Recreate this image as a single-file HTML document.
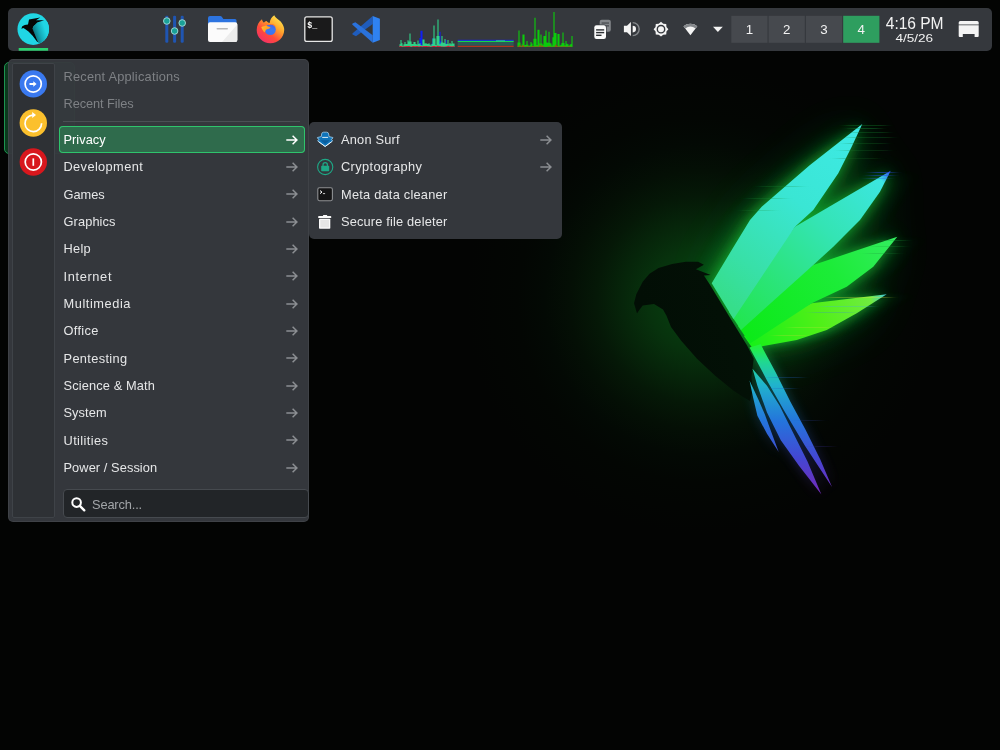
<!DOCTYPE html>
<html><head><meta charset="utf-8"><title>Parrot Desktop</title>
<style>
html,body{margin:0;padding:0;background:#000;}
body{width:1000px;height:750px;overflow:hidden;position:relative;font-family:"Liberation Sans", sans-serif;font-size:12.8px;color:#e6e7e8;}
#wall{position:absolute;left:0;top:0;}
#panel,#menu,#sub{will-change:transform;}
.t{white-space:pre;}
#deskicon{position:absolute;left:4px;top:62px;width:71px;height:91.5px;border:1px solid #1d9550;border-radius:5px;background:#0c3a1e;box-sizing:border-box;}
#panel{position:absolute;left:8px;top:8px;width:984px;height:42.7px;background:#35383d;border-radius:5px;}
#panel svg{position:absolute;}
#menu{position:absolute;left:8px;top:59px;width:300.5px;height:463px;background:rgba(54,57,62,0.97);border-radius:5px;box-shadow:inset 0 0 0 1px rgba(255,255,255,0.06);}
#side{position:absolute;left:4px;top:4px;width:42.5px;height:455px;background:#2e3135;box-sizing:border-box;border:1px solid #3f4348;border-radius:2px;}
#side svg{position:absolute;left:0;top:0;}
.rec{position:absolute;left:55.5px;color:#7e8185;height:20px;line-height:20px;}
.sep{position:absolute;left:55px;top:62px;width:237px;height:1px;background:#4b4f54;}
.row{position:absolute;left:51px;width:246px;height:27.4px;line-height:28.8px;box-sizing:border-box;padding-left:4.5px;border-radius:4px;color:#e6e7e8;}
.row .arr{position:absolute;left:226.6px;top:8.7px;color:#8b8e92;}
.row.sel{background:#2f6b4c;box-shadow:inset 0 0 0 1px #2fc46c;color:#fff;}
.row.sel .arr{color:#fff;}
#search{position:absolute;left:55px;top:430px;width:245.5px;height:29px;box-sizing:border-box;background:#222528;border:1px solid #464a4f;border-radius:4px;}
#search .t{position:absolute;left:28px;top:1px;line-height:28.4px;color:#a2a5a8;}
#search svg{position:absolute;left:7px;top:7px;}
#sub{position:absolute;left:309px;top:122px;width:253px;height:117px;background:#34373c;border-radius:5px;}
#sub .it{position:absolute;left:32px;height:27.4px;line-height:28.4px;color:#e6e7e8;}
#sub .arr{position:absolute;left:231px;color:#8b8e92;}
#sub svg.ic{position:absolute;}
</style></head>
<body>
<svg id="wall" width="1000" height="750" viewBox="0 0 1000 750">
<defs>
<radialGradient id="bgG" cx="700" cy="300" r="260" gradientUnits="userSpaceOnUse">
<stop offset="0.0" stop-color="#084010"/><stop offset="0.1" stop-color="#073c0f"/><stop offset="0.2" stop-color="#07320d"/><stop offset="0.3" stop-color="#06250a"/><stop offset="0.4" stop-color="#051807"/><stop offset="0.5" stop-color="#040f05"/><stop offset="0.6" stop-color="#030904"/><stop offset="0.7" stop-color="#030603"/><stop offset="0.8" stop-color="#030503"/><stop offset="0.9" stop-color="#030403"/><stop offset="1.0" stop-color="#030403"/>
</radialGradient>
<linearGradient id="f1" x1="862" y1="124" x2="722" y2="300" gradientUnits="userSpaceOnUse">
<stop offset="0" stop-color="#3eeae6"/><stop offset="0.45" stop-color="#3ae6d4"/><stop offset="0.8" stop-color="#38e0a8"/><stop offset="1" stop-color="#36de8a"/>
</linearGradient>
<linearGradient id="f2" x1="890" y1="171" x2="740" y2="325" gradientUnits="userSpaceOnUse">
<stop offset="0" stop-color="#3050f0"/><stop offset="0.06" stop-color="#3ce6e0"/><stop offset="0.4" stop-color="#34e4b4"/><stop offset="0.7" stop-color="#2ce480"/><stop offset="1" stop-color="#22e650"/>
</linearGradient>
<linearGradient id="f3" x1="897" y1="237" x2="745" y2="335" gradientUnits="userSpaceOnUse">
<stop offset="0" stop-color="#34ec60"/><stop offset="0.4" stop-color="#1cec38"/><stop offset="1" stop-color="#0cea18"/>
</linearGradient>
<linearGradient id="f4" x1="887" y1="294" x2="752" y2="345" gradientUnits="userSpaceOnUse">
<stop offset="0" stop-color="#40c8e8"/><stop offset="0.12" stop-color="#70ec40"/><stop offset="0.5" stop-color="#50f018"/><stop offset="1" stop-color="#18f018"/>
</linearGradient>
<linearGradient id="tl" x1="0" y1="347" x2="0" y2="496" gradientUnits="userSpaceOnUse">
<stop offset="0" stop-color="#22f040"/><stop offset="0.1" stop-color="#20d890"/><stop offset="0.25" stop-color="#20b4cc"/><stop offset="0.5" stop-color="#2474dc"/><stop offset="0.75" stop-color="#4446d2"/><stop offset="1" stop-color="#7828b8"/>
</linearGradient>
<linearGradient id="bd" x1="650" y1="330" x2="750" y2="300" gradientUnits="userSpaceOnUse">
<stop offset="0" stop-color="#020e05"/><stop offset="0.7" stop-color="#031006"/><stop offset="1" stop-color="#031207"/>
</linearGradient>
<filter id="bl1" x="-50%" y="-50%" width="200%" height="200%"><feGaussianBlur stdDeviation="24"/></filter>
<filter id="blS" x="-20%" y="-20%" width="140%" height="140%"><feGaussianBlur stdDeviation="4 0.5"/></filter>
<filter id="blH" x="-50%" y="-50%" width="200%" height="200%"><feGaussianBlur stdDeviation="16 2"/></filter>
<filter id="bl3" x="-50%" y="-50%" width="200%" height="200%"><feGaussianBlur stdDeviation="12"/></filter>
<filter id="bl2" x="-50%" y="-50%" width="200%" height="200%"><feGaussianBlur stdDeviation="6"/></filter>
<g id="wing">
<polygon fill="url(#f4)" points="811.7,303.3 886.7,294.3 856.7,313.3 826.7,330 796.7,340 756.7,347.3 752,347.5 744,336"/>
<polygon fill="url(#f3)" points="813.3,265 897.3,236.7 873.3,266.7 846.7,286.7 811.7,303.3 750,343.5 738,326"/>
<polygon fill="url(#f2)" points="795,226.7 890.7,170.7 880,191.7 860,220 833.3,246.7 813.3,265 741,330 729,312"/>
<polygon fill="url(#f1)" points="862.3,124 851.7,146.7 838.3,173.3 813.3,210 795,226.7 733.5,319 711.7,283.3 731.7,250 750,220 761.7,206.7 810,165"/>
</g>
<g id="tail" fill="url(#tl)">
<polygon points="749.5,347.5 760.6,344.3 775.5,372 790.4,401.8 805.4,429.6 820.3,459.4 832,487 805.4,446.6 784,410.4 767,380.5"/>
<polygon points="752.5,368.8 767,385.8 779.8,406.1 792.6,431.7 807.5,461.5 821.4,494.6 799,465.8 780.8,440.2 767,412.5 757.4,385.8"/>
<polygon points="749.5,380.5 758.5,399.7 764.9,414.6 771.2,431.7 778.7,451.9 767,433.8 757.4,415.7 753.1,397.6"/>
</g>
<g id="wingG" fill="#12d23a">
<polygon points="811.7,303.3 886.7,294.3 856.7,313.3 826.7,330 796.7,340 756.7,347.3 752,347.5 744,336"/>
<polygon points="813.3,265 897.3,236.7 873.3,266.7 846.7,286.7 811.7,303.3 750,343.5 738,326"/>
<polygon points="795,226.7 890.7,170.7 880,191.7 860,220 833.3,246.7 813.3,265 741,330 729,312"/>
<polygon points="862.3,124 851.7,146.7 838.3,173.3 813.3,210 795,226.7 733.5,319 711.7,283.3 731.7,250 750,220 761.7,206.7 810,165"/>
</g>
</defs>
<rect width="1000" height="750" fill="#030403"/>
<rect width="1000" height="750" fill="url(#bgG)"/>
<use href="#wingG" filter="url(#bl1)" opacity="0.3"/>
<use href="#wingG" filter="url(#bl3)" opacity="0.3"/>
<use href="#wingG" filter="url(#bl2)" opacity="0.42"/>
<use href="#wingG" filter="url(#blH)" opacity="0.3"/>
<use href="#tail" filter="url(#bl2)" opacity="0.35"/>
<path fill="url(#bd)" d="M637,313.5 L634,303.3 L636.3,294.2 L642.7,281.7 L649.5,273.8 L658.5,268.1 L672.1,264 L685.7,261.8 L698.2,261.8 L703.9,264.7 L695.9,269.3 L710.7,274.9 L703.9,275.4 L709.5,284 L728.8,315.7 L746.9,345.2 L753.7,358.8 L751.4,376.9 L752.6,390.5 L750,401 L743.5,397.3 L733.3,390.5 L715.2,375.8 L697,358.8 L681.2,340.7 L671,327 L666.5,315.7 L663,309.4 L654,304 L642.7,305.5 L639.3,310 Z"/>
<use href="#wing"/>
<use href="#tail"/>
<g opacity="0.6" filter="url(#blS)">
<rect x="846" y="125" width="40" height="1" fill="#1c9a3a" opacity="0.5"/><rect x="850" y="128" width="30" height="1" fill="#1c9a3a" opacity="0.6"/><rect x="852" y="132" width="36" height="1" fill="#178a34" opacity="0.5"/><rect x="848" y="137" width="44" height="1" fill="#178a34" opacity="0.45"/><rect x="846" y="143" width="40" height="1" fill="#137a2c" opacity="0.45"/><rect x="842" y="150" width="46" height="1" fill="#137a2c" opacity="0.4"/><rect x="838" y="158" width="40" height="1" fill="#126a28" opacity="0.4"/>
<rect x="760" y="186" width="40" height="1" fill="#168a34" opacity="0.4"/><rect x="748" y="198" width="36" height="1" fill="#168a34" opacity="0.4"/><rect x="742" y="210" width="30" height="1" fill="#168a34" opacity="0.35"/>
<rect x="872" y="172" width="22" height="1" fill="#2848e0" opacity="0.9"/><rect x="870" y="175" width="22" height="1" fill="#2848e0" opacity="0.8"/><rect x="868" y="178" width="20" height="1" fill="#3060e8" opacity="0.6"/>
<rect x="880" y="240" width="26" height="1" fill="#1c9a3a" opacity="0.5"/><rect x="874" y="246" width="30" height="1" fill="#1c9a3a" opacity="0.4"/><rect x="868" y="253" width="30" height="1" fill="#178a34" opacity="0.4"/>
<rect x="830" y="297" width="60" height="1" fill="#e8e040" opacity="0.5"/><rect x="822" y="306" width="50" height="1" fill="#40b0e0" opacity="0.5"/><rect x="812" y="312" width="40" height="1" fill="#3080e0" opacity="0.45"/><rect x="790" y="327" width="40" height="1" fill="#d0e040" opacity="0.4"/><rect x="775" y="335" width="30" height="1" fill="#e0d040" opacity="0.4"/>
<rect x="770" y="377" width="32" height="1" fill="#2060c0" opacity="0.5"/><rect x="772" y="388" width="22" height="1" fill="#2060c0" opacity="0.5"/><rect x="800" y="420" width="20" height="1" fill="#3040a0" opacity="0.4"/><rect x="812" y="446" width="20" height="1" fill="#4030a0" opacity="0.4"/>
</g>
</svg>

<div id="deskicon"></div>
<div id="panel">
<svg width="1000" height="60" viewBox="0 0 1000 60" style="left:-8px;top:-8px">
<defs>
<clipPath id="lgc"><circle cx="33.25" cy="29.1" r="15.8"/></clipPath>
<linearGradient id="lgw" x1="32" y1="30" x2="44" y2="26" gradientUnits="userSpaceOnUse"><stop offset="0" stop-color="#0a6d78"/><stop offset="0.5" stop-color="#14aab8"/><stop offset="1" stop-color="#20d6e4"/></linearGradient>
<linearGradient id="ffg" x1="280" y1="17" x2="261" y2="42" gradientUnits="userSpaceOnUse"><stop offset="0" stop-color="#ffe94f"/><stop offset="0.35" stop-color="#ffa32c"/><stop offset="0.65" stop-color="#ff4b3a"/><stop offset="1" stop-color="#f22d6c"/></linearGradient>
<linearGradient id="ffb" x1="272" y1="24" x2="268" y2="36" gradientUnits="userSpaceOnUse"><stop offset="0" stop-color="#4b5fe8"/><stop offset="0.4" stop-color="#3a7af2"/><stop offset="1" stop-color="#3f6fee"/></linearGradient>
<linearGradient id="ffh" x1="262" y1="26" x2="270" y2="31" gradientUnits="userSpaceOnUse"><stop offset="0" stop-color="#ffbd2e"/><stop offset="1" stop-color="#ff8a22"/></linearGradient>
</defs>
<circle cx="33.25" cy="29.1" r="15.8" fill="#20d6e4"/>
<g clip-path="url(#lgc)"><path d="M32.3,28.6 L36.5,23 L44,20.4 L50,22 L50,38 L39,44 L37.9,41.7 Z" fill="url(#lgw)"/>
<path d="M21.3,28.7 L22.3,26.2 L24.8,25 L28,24.6 L29,19.4 L40.2,17.6 L36,20.3 L44.1,20.2 L37.2,22.6 L33.5,26.3 L32.5,28.6 L38,41.9 L37.3,42 L32.6,35.8 L28.5,31.6 L25.4,29.3 L23.4,27.9 Z" fill="#050505"/></g>
<rect x="18.7" y="48" width="29.4" height="2.7" fill="#2bd46f"/>
<rect x="165.3" y="15.7" width="3" height="27" rx="1.2" fill="#1f55b2"/>
<rect x="173.1" y="15.7" width="3" height="27" rx="1.2" fill="#1f55b2"/>
<rect x="180.7" y="15.7" width="3" height="27" rx="1.2" fill="#1f55b2"/>
<circle cx="166.8" cy="21" r="3.3" fill="#1aa198" stroke="#a9dcd8" stroke-width="0.9"/>
<circle cx="174.6" cy="31" r="3.3" fill="#1aa198" stroke="#a9dcd8" stroke-width="0.9"/>
<circle cx="182.2" cy="23" r="3.3" fill="#1aa198" stroke="#a9dcd8" stroke-width="0.9"/>
<path d="M208,18 a2,2 0 0 1 2,-2 h10.2 a2,2 0 0 1 1.6,0.8 l1.6,2.2 h11.6 a1.5,1.5 0 0 1 1.5,1.5 v6 h-28.5 z" fill="#2d74e0"/>
<rect x="208" y="22.3" width="29.3" height="19.7" rx="2" fill="#fbfbfb"/>
<path d="M237.3,24.5 V40 a2,2 0 0 1 -2,2 H222 Z" fill="#ececec"/>
<rect x="216.5" y="28" width="11.5" height="1.6" rx="0.8" fill="#b9b9b9"/>
<path d="M262,19.3 C262.3,21 262.9,22 264,22.8 C264.6,21.6 265.4,21 266.6,20.9 C267.3,22 268.2,22.6 269.6,23 C270,20 271.6,17 274.3,15.3 C275.6,18.6 280.6,20.2 282.7,24.4 C283.8,26.4 284.3,28.2 284.2,30 C284,37.5 278,43.2 270.4,43.2 C262.8,43.2 256.7,37.3 256.7,30 C256.7,25.5 258.8,21.8 262,19.3 Z" fill="url(#ffg)"/>
<circle cx="270.3" cy="29.6" r="5.5" fill="url(#ffb)"/>
<path d="M261.3,27.2 C263,26 265,26.6 266.2,25.6 C267.2,26.6 269,26.6 270.6,27.2 C270,28.6 268.4,29 266.8,29.2 C265.6,30 265,31.2 265,32.6 C263.2,31.6 262.4,29.4 261.3,27.2 Z" fill="url(#ffh)"/>
<path d="M264.6,23.4 C266,23 268.5,23.2 270.5,24.3 C273,23.5 275.5,25 276.2,27.5 C275,25.5 272.5,24.6 270.3,24.9 C268,24.9 266,24.5 264.6,23.4 Z" fill="#ff7a28"/>
<rect x="304.8" y="16.8" width="27.4" height="24.6" rx="2" fill="#1a1a1b" stroke="#e8e8e8" stroke-width="1.3"/>
<text x="307.2" y="28.2" font-family="'Liberation Mono', monospace" font-weight="bold" font-size="9.6" fill="#fff" textLength="10" lengthAdjust="spacingAndGlyphs">$_</text>
<polygon points="372.7,15.9 372.7,23.9 356,36.3 352.5,34.4 352.4,33.6" fill="#1f5cbc"/>
<polygon points="352.2,24.6 352.5,23.6 355.4,22.3 372.7,35.2 372.7,42.8" fill="#2a72dc"/>
<polygon points="372.7,15.9 379.9,18.8 379.9,39.9 372.7,42.8" fill="#2f82f2"/>
<path d="M400.0,47V46.8M401.0,47V46.7M403.0,47V46.9M405.0,47V46.9M406.0,47V46.9M407.0,47V46.7M408.0,47V46.9M409.0,47V46.9M411.0,47V46.6M412.0,47V46.8M414.0,47V46.9M415.0,47V46.9M416.0,47V46.6M417.0,47V46.9M419.0,47V43.4M420.0,47V38.0M421.0,47V30.8M422.0,47V30.8M423.0,47V46.7M424.0,47V46.9M425.0,47V46.6M426.0,47V46.7M427.0,47V46.7M428.0,47V46.8M430.0,47V46.9M431.0,47V46.7M432.0,47V43.4M433.0,47V38.0M434.0,47V43.4M435.0,47V46.9M436.0,47V46.9M437.0,47V46.6M438.0,47V46.8M439.0,47V40.9M440.0,47V31.7M441.0,47V40.9M442.0,47V46.8M443.0,47V46.7M444.0,47V46.7M445.0,47V44.2M446.0,47V40.0M447.0,47V44.2M448.0,47V46.9M449.0,47V46.7M450.0,47V46.7M451.0,47V46.7M452.0,47V46.8M454.0,47V46.7" stroke="#1020f0" stroke-width="1.1" fill="none" opacity="1"/>
<path d="M400.0,47V44.2M401.0,47V40.0M402.0,47V43.2M403.0,47V45.7M404.0,47V44.3M405.0,47V42.0M406.0,47V43.9M407.0,47V44.1M408.0,47V40.3M409.0,47V41.6M410.0,47V33.4M411.0,47V41.6M412.0,47V43.9M413.0,47V44.0M414.0,47V42.0M415.0,47V42.0M416.0,47V44.0M417.0,47V44.4M418.0,47V40.5M419.0,47V44.1M420.0,47V43.2M421.0,47V44.9M422.0,47V45.4M423.0,47V39.5M424.0,47V39.5M425.0,47V43.5M426.0,47V43.2M427.0,47V43.7M428.0,47V44.1M429.0,47V43.3M430.0,47V44.4M431.0,47V45.6M432.0,47V43.9M433.0,47V38.4M434.0,47V25.5M435.0,47V38.4M436.0,47V45.1M437.0,47V36.0M438.0,47V19.5M439.0,47V36.0M440.0,47V44.2M441.0,47V42.6M442.0,47V36.0M443.0,47V42.6M444.0,47V42.9M445.0,47V39.0M446.0,47V43.8M447.0,47V44.0M448.0,47V40.0M449.0,47V44.2M450.0,47V42.9M451.0,47V44.3M452.0,47V41.1M453.0,47V43.5M454.0,47V43.4" stroke="#2edb8b" stroke-width="1.1" fill="none" opacity="0.95"/>
<path d="M400.0,47V45.9M401.0,47V45.9M402.0,47V46.6M403.0,47V46.5M404.0,47V46.2M405.0,47V46.4M406.0,47V45.9M407.0,47V46.3M408.0,47V45.9M409.0,47V45.9M410.0,47V46.3M411.0,47V46.8M412.0,47V46.6M413.0,47V46.0M414.0,47V46.3M415.0,47V46.2M416.0,47V46.3M417.0,47V46.0M418.0,47V46.2M419.0,47V46.5M420.0,47V46.3M421.0,47V46.0M422.0,47V46.4M423.0,47V46.3M424.0,47V46.1M425.0,47V46.3M426.0,47V45.9M427.0,47V45.9M428.0,47V46.5M429.0,47V45.9M430.0,47V46.7M431.0,47V46.4M432.0,47V46.6M433.0,47V46.1M434.0,47V45.9M435.0,47V46.1M436.0,47V46.7M437.0,47V45.8M438.0,47V45.8M439.0,47V46.3M440.0,47V46.0M441.0,47V46.4M442.0,47V46.5M443.0,47V46.5M444.0,47V46.8M445.0,47V46.4M446.0,47V46.5M447.0,47V46.3M448.0,47V45.8M449.0,47V45.8M450.0,47V46.5M451.0,47V46.0M452.0,47V46.7M453.0,47V45.9M454.0,47V46.5" stroke="#e01030" stroke-width="1.1" fill="none" opacity="1"/>
<rect x="457.7" y="39.8" width="56" height="1.1" fill="#1a20f0"/>
<rect x="457.7" y="40.9" width="56" height="1.1" fill="#14d84a"/>
<rect x="457.7" y="42" width="56" height="3.7" fill="#2c5a58"/>
<rect x="496" y="40.4" width="9" height="0.9" fill="#2fc9a0"/>
<rect x="457.7" y="45.8" width="56" height="1.1" fill="#c0341c"/>
<path d="M518.0,47V42.4M519.0,47V30.5M520.0,47V42.4M521.0,47V45.9M522.0,47V44.5M523.0,47V34.6M524.0,47V34.6M525.0,47V44.9M526.0,47V44.7M527.0,47V41.0M528.0,47V44.8M529.0,47V46.0M530.0,47V45.3M531.0,47V42.0M532.0,47V43.4M533.0,47V46.1M534.0,47V38.8M535.0,47V17.8M536.0,47V38.8M537.0,47V45.0M538.0,47V29.7M539.0,47V29.7M540.0,47V43.5M541.0,47V34.6M542.0,47V43.5M543.0,47V44.7M544.0,47V36.0M545.0,47V36.0M546.0,47V30.4M547.0,47V42.4M548.0,47V42.7M549.0,47V31.8M550.0,47V42.7M551.0,47V43.6M552.0,47V45.5M553.0,47V37.2M554.0,47V11.9M555.0,47V33.0M556.0,47V33.0M557.0,47V46.1M558.0,47V33.9M559.0,47V33.9M560.0,47V45.5M561.0,47V44.7M562.0,47V42.9M563.0,47V32.5M564.0,47V42.9M565.0,47V45.3M566.0,47V41.0M567.0,47V43.8M568.0,47V44.2M569.0,47V45.7M570.0,47V44.8M571.0,47V43.9M572.0,47V36.0" stroke="#0bcc0b" stroke-width="1.1" fill="none" opacity="1"/>
<path d="M518.0,47V46.6M519.0,47V46.6M520.0,47V44.9M521.0,47V46.7M522.0,47V46.6M523.0,47V45.0M524.0,47V46.6M525.0,47V46.7M527.0,47V46.3M528.0,47V46.6M529.0,47V46.6M530.0,47V46.7M531.0,47V46.7M532.0,47V46.5M533.0,47V46.3M534.0,47V46.8M535.0,47V46.8M536.0,47V46.4M537.0,47V46.6M538.0,47V46.6M539.0,47V46.7M540.0,47V44.8M541.0,47V46.9M542.0,47V45.4M543.0,47V46.5M544.0,47V46.7M545.0,47V46.9M546.0,47V46.9M547.0,47V46.9M548.0,47V46.4M549.0,47V46.5M550.0,47V46.5M551.0,47V46.9M552.0,47V46.7M553.0,47V46.7M554.0,47V46.8M555.0,47V46.8M556.0,47V44.8M557.0,47V46.5M558.0,47V46.4M559.0,47V46.5M560.0,47V46.8M561.0,47V46.4M562.0,47V46.8M563.0,47V46.6M564.0,47V46.5M565.0,47V46.4M566.0,47V46.8M567.0,47V46.9M568.0,47V46.4M569.0,47V46.5M570.0,47V46.5M571.0,47V46.7" stroke="#d02818" stroke-width="1.1" fill="none" opacity="0.9"/>
<rect x="599.7" y="19.7" width="11.1" height="12" rx="2" fill="#83868a"/>
<rect x="601.6" y="22.4" width="7.4" height="1.3" fill="#4a4d52"/><rect x="601.6" y="25.2" width="7.4" height="1.3" fill="#4a4d52"/>
<rect x="593.7" y="24.6" width="12.9" height="14.8" rx="2.6" fill="#35383d"/>
<rect x="594.3" y="25.2" width="11.7" height="13.7" rx="2.2" fill="#fbfbfb"/>
<rect x="596.1" y="29.2" width="8.1" height="1.4" fill="#2c2f33"/><rect x="596.1" y="31.9" width="8.1" height="1.4" fill="#2c2f33"/><rect x="596.1" y="34.6" width="5.4" height="1.4" fill="#2c2f33"/>
<path d="M623.9,25.8 H627 L630.9,22.1 V35.9 L627,32.2 H623.9 Z" fill="#f4f4f4"/>
<path d="M632.7,25.8 A3.3,3.3 0 0 1 632.7,32.4 Z" fill="#f4f4f4"/>
<path d="M632.7,22.6 A6.5,6.5 0 0 1 632.7,35.6" fill="none" stroke="#84878b" stroke-width="1.4"/>
<polygon points="661.00,21.80 663.26,23.75 666.23,23.97 666.45,26.94 668.40,29.20 666.45,31.46 666.23,34.43 663.26,34.65 661.00,36.60 658.74,34.65 655.77,34.43 655.55,31.46 653.60,29.20 655.55,26.94 655.77,23.97 658.74,23.75" fill="#f4f4f4"/>
<circle cx="661" cy="29.2" r="3.7" fill="#f4f4f4" stroke="#35383d" stroke-width="1.4"/>
<path d="M690.4,35.3 L683.5,26.2 A11.2,11.2 0 0 1 697.3,26.2 Z" fill="#f4f4f4"/>
<path d="M683.5,26.2 A11.2,11.2 0 0 1 697.3,26.2 L695.6,28.4 A8.5,8.5 0 0 0 685.2,28.4 Z" fill="#84878b"/>
<polygon points="713,26.8 722.8,26.8 717.9,32.1" fill="#f4f4f4"/>
<rect x="731.3" y="15.8" width="36.2" height="27" fill="#46494e"/>
<text x="749.4" y="34.2" text-anchor="middle" font-family="'Liberation Sans', sans-serif" font-size="13.33" fill="#f2f2f2">1</text>
<rect x="768.6" y="15.8" width="36.2" height="27" fill="#46494e"/>
<text x="786.7" y="34.2" text-anchor="middle" font-family="'Liberation Sans', sans-serif" font-size="13.33" fill="#f2f2f2">2</text>
<rect x="805.9" y="15.8" width="36.2" height="27" fill="#46494e"/>
<text x="824.0" y="34.2" text-anchor="middle" font-family="'Liberation Sans', sans-serif" font-size="13.33" fill="#f2f2f2">3</text>
<rect x="843.2" y="15.8" width="36.2" height="27" fill="#2e9e5f"/>
<text x="861.3000000000001" y="34.2" text-anchor="middle" font-family="'Liberation Sans', sans-serif" font-size="13.33" fill="#f2f2f2">4</text>
<text x="885.8" y="29.2" textLength="57.8" lengthAdjust="spacing" font-family="'Liberation Sans', sans-serif" font-size="15.6" fill="#f2f2f2">4:16 PM</text>
<text x="895.4" y="41.5" textLength="37.8" lengthAdjust="spacingAndGlyphs" font-family="'Liberation Sans', sans-serif" font-size="10.6" fill="#f2f2f2">4/5/26</text>
<path d="M958.7,24.4 V22.6 a1.6,1.6 0 0 1 1.6,-1.6 h16.8 a1.6,1.6 0 0 1 1.6,1.6 V24.4 Z" fill="#f4f4f4"/>
<path d="M958.7,25.3 H978.7 V36 a1,1 0 0 1 -1,1 H974.6 V34 H962.8 V37 H959.7 a1,1 0 0 1 -1,-1 Z" fill="#f4f4f4"/>
</svg>
</div>
<div id="menu">
<div id="side">
<svg width="41" height="453" viewBox="13 64 41 453">
<circle cx="33.3" cy="83.9" r="13.7" fill="#3a79ef"/>
<circle cx="33.2" cy="84" r="8.1" fill="none" stroke="#fff" stroke-width="1.7"/>
<path d="M29.5,83.1 H33.3 V81.2 L36.6,84 L33.3,86.8 V84.9 H29.5 Z" fill="#fff"/>
<circle cx="33.3" cy="123" r="13.7" fill="#fbc02d"/>
<path d="M41.6,123.3 A8.3,8.3 0 1 1 32.6,115.03" fill="none" stroke="#fff" stroke-width="1.7"/>
<path d="M32.2,112 L36,115 L32.2,118.1 Z" fill="#fff"/>
<circle cx="33.3" cy="162" r="13.7" fill="#d8171d"/>
<circle cx="33.3" cy="162" r="8.1" fill="none" stroke="#fff" stroke-width="1.7"/>
<rect x="32.45" y="158.4" width="1.7" height="7.4" fill="#fff"/>
</svg>

</div>
<div class="rec" style="top:7.5px"><span class="t" style="letter-spacing:0.215px">Recent Applications</span></div>
<div class="rec" style="top:34.5px"><span class="t" style="letter-spacing:-0.094px">Recent Files</span></div>
<div class="sep"></div>
<div class="row sel" style="top:67.00px"><span class="t" style="letter-spacing:0.035px">Privacy</span><svg class="arr" width="12" height="10" viewBox="0 0 12 10"><path d="M0.3 5H10.6M6.6 0.8L10.9 5L6.6 9.2" fill="none" stroke="currentColor" stroke-width="1.5"/></svg></div>
<div class="row" style="top:94.33px"><span class="t" style="letter-spacing:0.381px">Development</span><svg class="arr" width="12" height="10" viewBox="0 0 12 10"><path d="M0.3 5H10.6M6.6 0.8L10.9 5L6.6 9.2" fill="none" stroke="currentColor" stroke-width="1.5"/></svg></div>
<div class="row" style="top:121.66px"><span class="t" style="letter-spacing:-0.010px">Games</span><svg class="arr" width="12" height="10" viewBox="0 0 12 10"><path d="M0.3 5H10.6M6.6 0.8L10.9 5L6.6 9.2" fill="none" stroke="currentColor" stroke-width="1.5"/></svg></div>
<div class="row" style="top:148.99px"><span class="t" style="letter-spacing:0.110px">Graphics</span><svg class="arr" width="12" height="10" viewBox="0 0 12 10"><path d="M0.3 5H10.6M6.6 0.8L10.9 5L6.6 9.2" fill="none" stroke="currentColor" stroke-width="1.5"/></svg></div>
<div class="row" style="top:176.32px"><span class="t" style="letter-spacing:0.293px">Help</span><svg class="arr" width="12" height="10" viewBox="0 0 12 10"><path d="M0.3 5H10.6M6.6 0.8L10.9 5L6.6 9.2" fill="none" stroke="currentColor" stroke-width="1.5"/></svg></div>
<div class="row" style="top:203.65px"><span class="t" style="letter-spacing:0.649px">Internet</span><svg class="arr" width="12" height="10" viewBox="0 0 12 10"><path d="M0.3 5H10.6M6.6 0.8L10.9 5L6.6 9.2" fill="none" stroke="currentColor" stroke-width="1.5"/></svg></div>
<div class="row" style="top:230.98px"><span class="t" style="letter-spacing:0.562px">Multimedia</span><svg class="arr" width="12" height="10" viewBox="0 0 12 10"><path d="M0.3 5H10.6M6.6 0.8L10.9 5L6.6 9.2" fill="none" stroke="currentColor" stroke-width="1.5"/></svg></div>
<div class="row" style="top:258.31px"><span class="t" style="letter-spacing:0.333px">Office</span><svg class="arr" width="12" height="10" viewBox="0 0 12 10"><path d="M0.3 5H10.6M6.6 0.8L10.9 5L6.6 9.2" fill="none" stroke="currentColor" stroke-width="1.5"/></svg></div>
<div class="row" style="top:285.64px"><span class="t" style="letter-spacing:0.352px">Pentesting</span><svg class="arr" width="12" height="10" viewBox="0 0 12 10"><path d="M0.3 5H10.6M6.6 0.8L10.9 5L6.6 9.2" fill="none" stroke="currentColor" stroke-width="1.5"/></svg></div>
<div class="row" style="top:312.97px"><span class="t" style="letter-spacing:0.134px">Science &amp; Math</span><svg class="arr" width="12" height="10" viewBox="0 0 12 10"><path d="M0.3 5H10.6M6.6 0.8L10.9 5L6.6 9.2" fill="none" stroke="currentColor" stroke-width="1.5"/></svg></div>
<div class="row" style="top:340.30px"><span class="t" style="letter-spacing:0.088px">System</span><svg class="arr" width="12" height="10" viewBox="0 0 12 10"><path d="M0.3 5H10.6M6.6 0.8L10.9 5L6.6 9.2" fill="none" stroke="currentColor" stroke-width="1.5"/></svg></div>
<div class="row" style="top:367.63px"><span class="t" style="letter-spacing:0.394px">Utilities</span><svg class="arr" width="12" height="10" viewBox="0 0 12 10"><path d="M0.3 5H10.6M6.6 0.8L10.9 5L6.6 9.2" fill="none" stroke="currentColor" stroke-width="1.5"/></svg></div>
<div class="row" style="top:394.96px"><span class="t" style="letter-spacing:0.082px">Power / Session</span><svg class="arr" width="12" height="10" viewBox="0 0 12 10"><path d="M0.3 5H10.6M6.6 0.8L10.9 5L6.6 9.2" fill="none" stroke="currentColor" stroke-width="1.5"/></svg></div>
<div id="search"><svg width="15" height="15" viewBox="0 0 15 15"><circle cx="5.6" cy="5.6" r="4.3" fill="none" stroke="#fff" stroke-width="2"/><path d="M8.8 8.8L13.3 13.3" stroke="#fff" stroke-width="2.4" stroke-linecap="round"/></svg><span class="t" style="letter-spacing:-0.135px">Search...</span></div>
</div>
<div id="sub">
<svg class="ic" width="253" height="117" viewBox="309 122 253 117" style="left:0;top:0">
<path d="M321.3,136.6 L321.6,134 Q321.9,132.2 323.6,132.2 H326.7 Q328.4,132.2 328.7,134 L329,136.6 L332.9,137.5 L332.3,138.9 L331.2,139.4 L332.7,140.9 L325.15,146.4 L317.6,140.9 L319.1,139.4 L318,138.9 L317.4,137.5 Z" fill="#0f74ba" stroke="#9fcdea" stroke-width="0.8" stroke-linejoin="round"/>
<path d="M318.6,141.7 L325.15,146.5 L331.7,141.7" fill="none" stroke="#eef6fb" stroke-width="1" stroke-linejoin="round"/>
<rect x="322.2" y="136.9" width="5.9" height="1" fill="#d6ebf7"/>
<path d="M320.5,140.2 H329.8 L325.15,143.8 Z" fill="#0a5c9c"/>
<circle cx="325.2" cy="167" r="7.6" fill="none" stroke="#1ea886" stroke-width="1.1"/>
<rect x="321.2" y="165.8" width="8" height="5.4" rx="0.6" fill="#1ea886"/>
<path d="M323,166 V164.9 a2.2,2.2 0 0 1 4.4,0 V166" fill="none" stroke="#1ea886" stroke-width="1.2"/>
<rect x="317.8" y="187.8" width="14.6" height="12.9" rx="1.6" fill="#151516" stroke="#8e9093" stroke-width="1.1"/>
<path d="M320,190.6 L322,192.1 L320,193.6" fill="none" stroke="#fff" stroke-width="1"/>
<rect x="322.9" y="193.2" width="2.2" height="0.9" fill="#ddd"/>
<path d="M318.2,217.9 V216.6 a0.7,0.7 0 0 1 0.7,-0.7 H323 V215.4 a0.5,0.5 0 0 1 0.5,-0.5 h3.2 a0.5,0.5 0 0 1 0.5,0.5 V215.9 H330.5 a0.7,0.7 0 0 1 0.7,0.7 V217.9 Z" fill="#fafafa"/>
<rect x="319" y="218.8" width="11.3" height="9.9" rx="0.8" fill="#fafafa"/>
<rect x="320.3" y="220" width="8.7" height="7.4" fill="#e6e6e6"/>
</svg>
<div class="it" style="top:4.00px"><span class="t" style="letter-spacing:0.209px">Anon Surf</span></div>
<svg class="arr" width="12" height="10" viewBox="0 0 12 10" style="top:12.70px"><path d="M0.3 5H10.6M6.6 0.8L10.9 5L6.6 9.2" fill="none" stroke="currentColor" stroke-width="1.5"/></svg>
<div class="it" style="top:31.33px"><span class="t" style="letter-spacing:0.364px">Cryptography</span></div>
<svg class="arr" width="12" height="10" viewBox="0 0 12 10" style="top:40.03px"><path d="M0.3 5H10.6M6.6 0.8L10.9 5L6.6 9.2" fill="none" stroke="currentColor" stroke-width="1.5"/></svg>
<div class="it" style="top:58.66px"><span class="t" style="letter-spacing:0.232px">Meta data cleaner</span></div>
<div class="it" style="top:85.99px"><span class="t" style="letter-spacing:0.171px">Secure file deleter</span></div>
</div>
</body></html>
